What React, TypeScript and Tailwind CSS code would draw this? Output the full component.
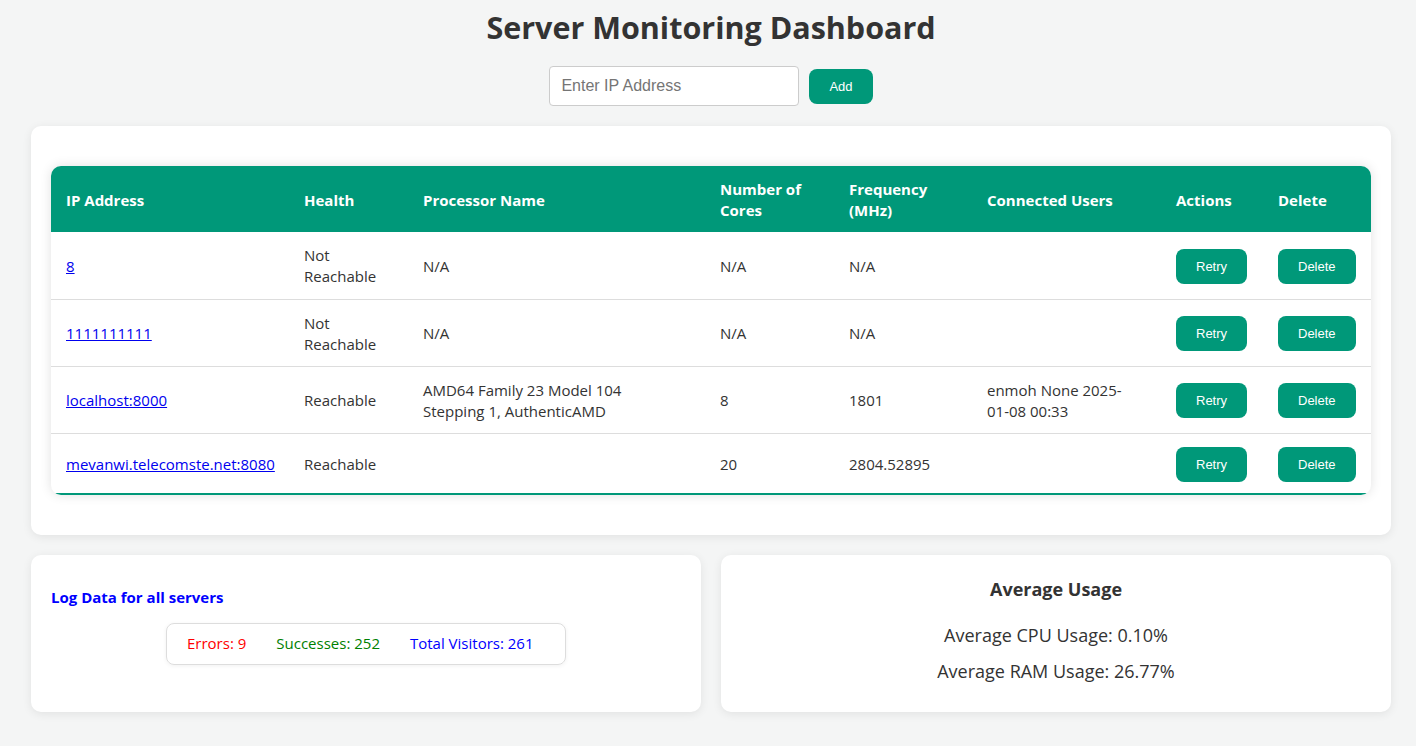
const servers = [
  { ip: "8", health: "Not Reachable", cpu: "N/A", cores: "N/A", freq: "N/A", users: "" },
  { ip: "1111111111", health: "Not Reachable", cpu: "N/A", cores: "N/A", freq: "N/A", users: "" },
  {
    ip: "localhost:8000",
    health: "Reachable",
    cpu: "AMD64 Family 23 Model 104 Stepping 1, AuthenticAMD",
    cores: "8",
    freq: "1801",
    users: "enmoh None 2025-01-08 00:33",
  },
  { ip: "mevanwi.telecomste.net:8080", health: "Reachable", cpu: "", cores: "20", freq: "2804.52895", users: "" },
];

const btn =
  "rounded-[8px] bg-[#009879] px-5 py-[10px] text-[13px] leading-[15px] text-white font-['Liberation_Sans',Arial,sans-serif]";

const td = "px-[15px] pt-[13px] pb-[11px]";

export default function App() {
  return (
    <div className="min-h-screen bg-[#f4f5f5] pl-[31px] pr-[25px] pt-2 pb-8 font-['Open_Sans',sans-serif] text-[15px] leading-[21px] text-[#333]">
      <h1 className="text-center text-[30.5px] leading-[38px] font-bold text-[#333]">Server Monitoring Dashboard</h1>

      <div className="mt-5 flex items-center justify-center gap-[10px]">
        <input
          placeholder="Enter IP Address"
          className="h-10 w-[250px] rounded-[4px] border border-[#ccc] bg-white px-[11px] text-[16px] font-['Liberation_Sans',Arial,sans-serif] placeholder:text-[#757575]"
        />
        <button className={btn}>Add</button>
      </div>

      <div className="mt-5 rounded-[10px] bg-white px-5 py-10 shadow-[0_2px_10px_rgba(0,0,0,0.08)]">
        <div className="overflow-hidden rounded-[10px] shadow-[0_0_12px_rgba(0,0,0,0.12)]">
          <table className="w-full table-fixed border-collapse">
            <colgroup>
              <col className="w-[238px]" />
              <col className="w-[119px]" />
              <col className="w-[297px]" />
              <col className="w-[129px]" />
              <col className="w-[138px]" />
              <col className="w-[189px]" />
              <col className="w-[102px]" />
              <col />
            </colgroup>
            <thead>
              <tr className="bg-[#009879] text-left text-white">
                {["IP Address", "Health", "Processor Name", "Number of Cores", "Frequency (MHz)", "Connected Users", "Actions", "Delete"].map(
                  (h) => (
                    <th key={h} className="px-[15px] pt-[13px] pb-[11px] font-bold">
                      {h}
                    </th>
                  )
                )}
              </tr>
            </thead>
            <tbody>
              {servers.map((s) => (
                <tr key={s.ip} className="border-b border-[#ddd] first:h-[67px] last:border-b-2 last:border-[#009879]">
                  <td className={td}>
                    <a href="#" className="text-[#0000ee] underline">
                      {s.ip}
                    </a>
                  </td>
                  <td className={td}>{s.health}</td>
                  <td className={td}>
                    <div className="max-w-[250px]">{s.cpu}</div>
                  </td>
                  <td className={td}>{s.cores}</td>
                  <td className={td}>{s.freq}</td>
                  <td className={td}>
                    <div className="max-w-[150px]">{s.users}</div>
                  </td>
                  <td className={td}>
                    <button className={btn}>Retry</button>
                  </td>
                  <td className={td}>
                    <button className={btn}>Delete</button>
                  </td>
                </tr>
              ))}
            </tbody>
          </table>
        </div>
      </div>

      <div className="mt-5 grid grid-cols-2 gap-5">
        <div className="h-[157px] rounded-[10px] bg-white px-5 pt-[32px] shadow-[0_2px_10px_rgba(0,0,0,0.08)]">
          <h3 className="font-bold text-[#0000ff]">Log Data for all servers</h3>
          <div className="mx-auto mt-[15px] flex h-[42px] w-[400px] items-center gap-[30px] rounded-[8px] border border-[#ddd] px-5 shadow-[0_1px_4px_rgba(0,0,0,0.06)]">
            <span className="text-[#ff0000]">Errors: 9</span>
            <span className="text-[#008000]">Successes: 252</span>
            <span className="text-[#0000ff]">Total Visitors: 261</span>
          </div>
        </div>
        <div className="flex h-[157px] flex-col items-center rounded-[10px] bg-white pt-[22px] text-[18px] leading-[25px] shadow-[0_2px_10px_rgba(0,0,0,0.08)]">
          <h3 className="font-bold">Average Usage</h3>
          <p className="mt-[21px]">Average CPU Usage: 0.10%</p>
          <p className="mt-[11px]">Average RAM Usage: 26.77%</p>
        </div>
      </div>
    </div>
  );
}
